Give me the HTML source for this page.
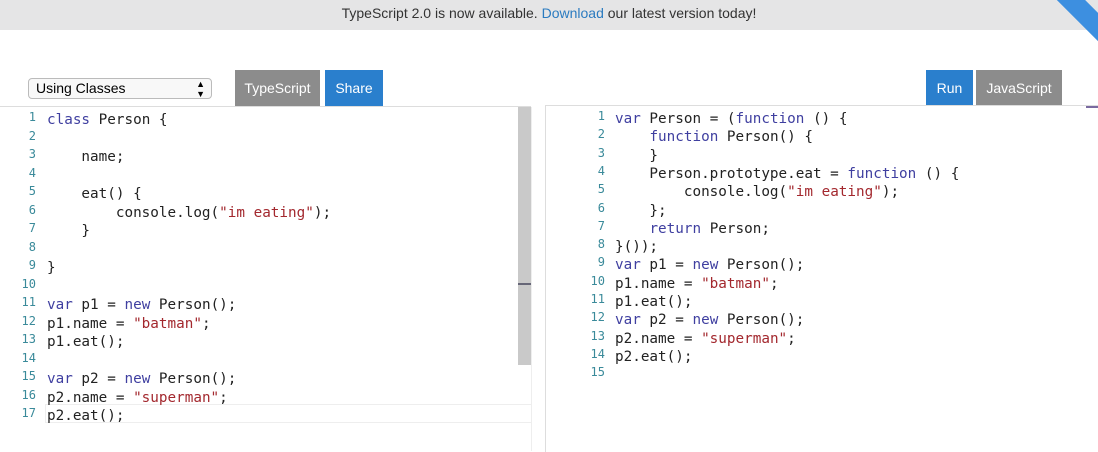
<!DOCTYPE html>
<html><head><style>
body{margin:0;width:1098px;height:451px;overflow:hidden;background:#fff;font-family:"Liberation Sans",sans-serif;position:relative}
.top{position:absolute;left:0;top:0;width:1098px;height:30px;background:#e5e5e6;text-align:center;font-size:14px;line-height:26px;color:#333}
.top a{color:#2b7bc0}
.rib{position:absolute;right:-40px;top:2px;width:110px;height:20px;background:#3d8fe0;transform:rotate(45deg);}
.sel{position:absolute;left:28px;top:78px;border:1px solid #bbb;border-radius:4px;background:#f8f8f8;font-size:14px;line-height:19px;padding-left:7px;box-sizing:border-box;width:184px;height:21px}
.sel span{position:absolute;right:6px;top:0;font-size:9px;line-height:10px}
.btn{position:absolute;top:70px;height:36px;color:#fff;font-size:14px;line-height:36px;text-align:center}
.g{background:#8c8c8c}.b{background:#2a7fcd}
.ed{position:absolute;font-family:"DejaVu Sans Mono","Liberation Mono",monospace;font-size:14.3px;color:#222}
.ln{position:absolute;width:20px;text-align:right;font-size:12px;color:#3a8a9a}
.line{position:absolute;white-space:pre;height:18px;line-height:18px}
.k{color:#3f3fa0}.s{color:#a3282e}
</style></head><body>
<div class="top">TypeScript 2.0 is now available. <a>Download</a> our latest version today!</div>
<div class="rib"></div>
<div class="sel">Using Classes<span>▲<br>▼</span></div>
<div class="btn g" style="left:235px;width:85px">TypeScript</div>
<div class="btn b" style="left:325px;width:58px">Share</div>
<div class="btn b" style="left:926px;width:47px">Run</div>
<div class="btn g" style="left:976px;width:86px">JavaScript</div>
<div style="position:absolute;left:0;top:106px;width:531px;height:1px;background:#ddd"></div>
<div style="position:absolute;left:518px;top:107px;width:14px;height:258px;background:#c9c9c9"></div>
<div style="position:absolute;left:518px;top:283px;width:14px;height:2px;background:#667"></div>
<div style="position:absolute;left:531px;top:107px;width:1px;height:344px;background:#eee"></div>
<div style="position:absolute;left:45px;top:404px;width:486px;height:17px;border:1px solid #eee;border-right:none"></div>
<div style="position:absolute;left:545px;top:105px;width:553px;height:346px;border-left:1px solid #ddd;border-top:1px solid #ddd"></div>
<div style="position:absolute;left:1086px;top:106px;width:12px;height:2px;background:#7a6aa0"></div>
<div class="ed" id="L"></div><div class="ed" id="R"></div>
<script>
function K(t){return '<span class="k">'+t+'</span>'}function S(t){return '<span class="s">'+t+'</span>'}
var L=[K('class')+' Person {','','    name;','','    eat() {','        console.log('+S('"im eating"')+');','    }','','}','',K('var')+' p1 = '+K('new')+' Person();','p1.name = '+S('"batman"')+';','p1.eat();','',K('var')+' p2 = '+K('new')+' Person();','p2.name = '+S('"superman"')+';','p2.eat();'];
var R=[K('var')+' Person = ('+K('function')+' () {','    '+K('function')+' Person() {','    }','    Person.prototype.eat = '+K('function')+' () {','        console.log('+S('"im eating"')+');','    };','    '+K('return')+' Person;','}());',K('var')+' p1 = '+K('new')+' Person();','p1.name = '+S('"batman"')+';','p1.eat();',K('var')+' p2 = '+K('new')+' Person();','p2.name = '+S('"superman"')+';','p2.eat();',''];
function draw(id,arr,y0,lh,nx,cx){var h='';arr.forEach(function(l,i){var y=y0+i*lh;h+='<div class="ln" style="left:'+nx+'px;top:'+(y-1)+'px">'+(i+1)+'</div><div class="line" style="left:'+cx+'px;top:'+y+'px">'+l+'</div>'});document.getElementById(id).innerHTML=h}
draw('L',L,111,18.5,16,47);draw('R',R,110,18.3,585,615);
</script>
</body></html>
